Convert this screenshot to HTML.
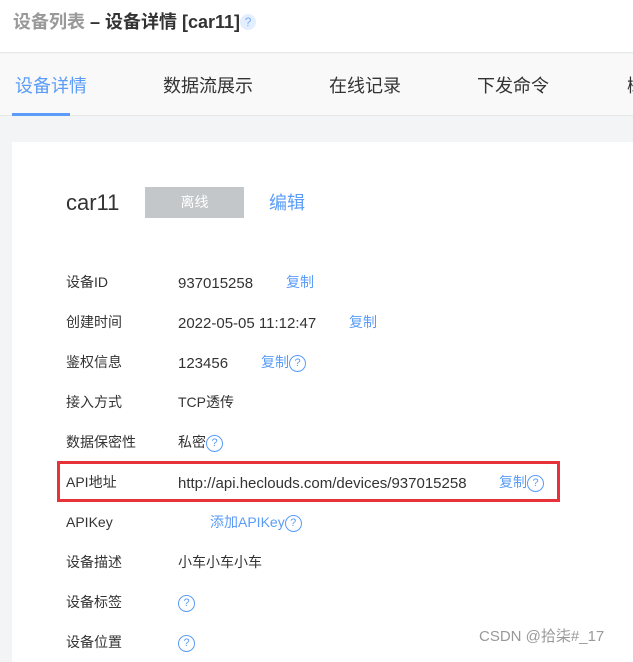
<!DOCTYPE html><html><head><meta charset="utf-8"><style>
*{margin:0;padding:0;box-sizing:border-box}
body{width:633px;height:654px;overflow:hidden;background:#f3f4f6;font-family:"Liberation Sans","Noto Sans CJK SC",sans-serif;position:relative;color:#333}
.a{position:absolute;white-space:nowrap;line-height:20px}
.q{display:inline-block;width:17px;height:17px;border:1px solid #5a9cf8;border-radius:50%;color:#5a9cf8;font-size:11px;line-height:15px;text-align:center;vertical-align:middle}
.l{left:66px;font-size:14px;color:#333}
.v{left:178px;font-size:14px;color:#333}
.n{font-size:15px;margin-top:2px}
.b{color:#5a9cf8;font-size:14px}
</style></head><body>
<div class="a" style="left:0;top:0;width:633px;height:53px;background:#fff;border-bottom:1px solid #e8e8e8"></div>
<div class="a" style="left:13px;top:10px;font-size:18px;font-weight:bold;line-height:24px"><span style="color:#999">设备列表</span> – 设备详情 [car11]<span style="display:inline-block;width:16px;height:16px;border-radius:50%;background:#e3eefe;color:#7aaef5;font-size:12px;line-height:16px;text-align:center;font-weight:normal;vertical-align:2px">?</span></div>
<div class="a" style="left:0;top:54px;width:633px;height:62px;background:#f9f9f9;border-bottom:1px solid #e8e8e8"></div>
<div class="a" style="left:15px;top:74px;font-size:18px;color:#5a9cf8;line-height:24px">设备详情</div>
<div class="a" style="left:12px;top:113px;width:58px;height:3px;background:#5a9cf8"></div>
<div class="a" style="left:163px;top:74px;font-size:18px;line-height:24px">数据流展示</div>
<div class="a" style="left:329px;top:74px;font-size:18px;line-height:24px">在线记录</div>
<div class="a" style="left:477px;top:74px;font-size:18px;line-height:24px">下发命令</div>
<div class="a" style="left:627px;top:74px;font-size:18px;line-height:24px">概</div>
<div class="a" style="left:12px;top:142px;width:621px;height:520px;background:#fff"></div>
<div class="a" style="left:66px;top:189px;font-size:22px;color:#333;line-height:28px">car11</div>
<div class="a" style="left:145px;top:187px;width:99px;height:31px;background:#c4c7ca;color:#fff;font-size:14px;line-height:31px;text-align:center">离线</div>
<div class="a" style="left:269px;top:190px;font-size:18px;color:#5a9cf8;line-height:26px">编辑</div>

<div class="a l" style="top:272px">设备ID</div><div class="a v n" style="top:272px">937015258</div><div class="a b" style="left:286px;top:272px">复制</div>
<div class="a l" style="top:312px">创建时间</div><div class="a v n" style="top:312px">2022-05-05 11:12:47</div><div class="a b" style="left:349px;top:312px">复制</div>
<div class="a l" style="top:352px">鉴权信息</div><div class="a v n" style="top:352px">123456</div><div class="a b" style="left:261px;top:352px">复制<span class="q">?</span></div>
<div class="a l" style="top:392px">接入方式</div><div class="a v" style="top:392px">TCP透传</div>
<div class="a l" style="top:432px">数据保密性</div><div class="a v" style="top:432px">私密<span class="q">?</span></div>
<div class="a" style="left:57px;top:461px;width:503px;height:41px;border:3px solid #e8323a"></div>
<div class="a l" style="top:472px">API地址</div><div class="a v n" style="top:472px">http://api.heclouds.com/devices/937015258</div><div class="a b" style="left:499px;top:472px">复制<span class="q">?</span></div>
<div class="a l" style="top:512px">APIKey</div><div class="a b" style="left:210px;top:512px">添加APIKey<span class="q">?</span></div>
<div class="a l" style="top:552px">设备描述</div><div class="a v" style="top:552px">小车小车小车</div>
<div class="a l" style="top:592px">设备标签</div><div class="a v" style="top:592px"><span class="q">?</span></div>
<div class="a l" style="top:632px">设备位置</div><div class="a v" style="top:632px"><span class="q">?</span></div>
<div class="a" style="left:479px;top:627px;font-size:15px;color:#999">CSDN @拾柒#_17</div>
</body></html>
